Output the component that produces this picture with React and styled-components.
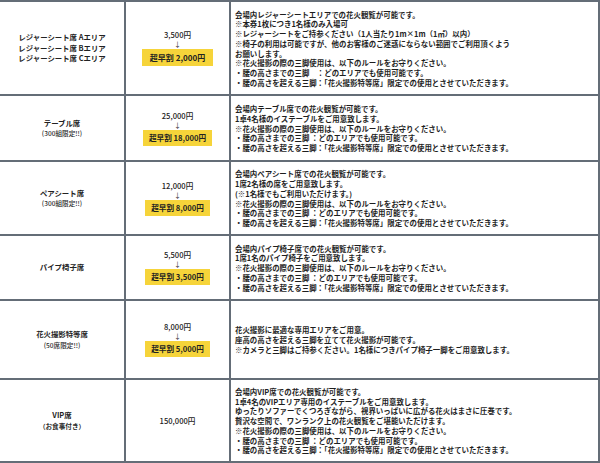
import React from 'react'
import styled, { createGlobalStyle } from 'styled-components'

const Global = createGlobalStyle`
  html, body { margin: 0; padding: 0; background: #fff; overflow: hidden; }
  body { font-family: 'Noto Sans CJK JP', 'Noto Sans', sans-serif; color: #222; }
`

const Table = styled.div`
  width: 600px; border-top: 2px solid #646d77;
  display: grid; grid-template-columns: 126px 105px 369px;
`
const Cell = styled.div`
  height: ${p => p.$h}px; box-sizing: border-box;
  border-right: 2px solid #646d77; border-bottom: 2px solid #646d77;
  display: flex; flex-direction: column; justify-content: center;
`
const NameCell = styled(Cell)`
  align-items: center; text-align: center;
`
const PriceCell = styled(Cell)`
  align-items: center;
`
const DescCell = styled(Cell)`
  padding-left: 4px; padding-top: 1px;
`
const Name = styled.div`
  font-size: 7.4px; line-height: 10.5px; font-weight: 700; color: #222;
  white-space: nowrap;
`
const Sub = styled.div`
  font-size: 6.6px; line-height: 10px; font-weight: ${p => p.$bold ? 700 : 500};
  color: #2a2a2a; white-space: nowrap;
`
const Price = styled.div`
  font-size: 7.6px; line-height: 10px; font-weight: 500; color: #222;
`
const Arrow = styled.div`
  font-size: 7px; line-height: 9px; color: #333;
`
const Badge = styled.div`
  background: #f6d43a; color: #222; font-weight: 700;
  font-size: ${p => p.$large ? 8 : 7.6}px; line-height: 10px;
  padding: ${p => p.$large ? '3.5px 8px' : '3px 6px'};
  white-space: nowrap;
`
const Line = styled.div`
  font-size: 7.45px; line-height: 9.7px; font-weight: 700; color: #1e1e1e;
  white-space: pre;
`

const tripod = [
  '※花火撮影の際の三脚使用は、以下のルールをお守りください。',
  '・腰の高さまでの三脚 ：どのエリアでも使用可能です。',
  '・腰の高さを超える三脚：「花火撮影特等席」限定での使用とさせていただきます。',
]

const rows = [
  {
    h: 94,
    name: ['レジャーシート席 Aエリア', 'レジャーシート席 Bエリア', 'レジャーシート席 Cエリア'],
    price: '3,500円', early: '2,000円', large: true,
    desc: [
      '会場内レジャーシートエリアでの花火観覧が可能です。',
      '※本券1枚につき1名様のみ入場可',
      '※レジャーシートをご持参ください（1人当たり1m×1m（1㎡）以内）',
      '※椅子の利用は可能ですが、他のお客様のご迷惑にならない範囲でご利用頂くよう',
      'お願いします。',
      '※花火撮影の際の三脚使用は、以下のルールをお守りください。',
      '・腰の高さまでの三脚　：どのエリアでも使用可能です。',
      tripod[2],
    ],
  },
  {
    h: 66,
    name: ['テーブル席'], sub: '(300組限定!!)',
    price: '25,000円', early: '18,000円',
    desc: ['会場内テーブル席での花火観覧が可能です。', '1卓4名様のイステーブルをご用意致します。', ...tripod],
  },
  {
    h: 74,
    name: ['ペアシート席'], sub: '(300組限定!!)',
    price: '12,000円', early: '8,000円',
    desc: ['会場内ペアシート席での花火観覧が可能です。', '1席2名様の席をご用意致します。', '(※1名様でもご利用いただけます。)', ...tripod],
  },
  {
    h: 65,
    name: ['パイプ椅子席'],
    price: '5,500円', early: '3,500円',
    desc: ['会場内パイプ椅子席での花火観覧が可能です。', '1席1名のパイプ椅子をご用意致します。', ...tripod],
  },
  {
    h: 79,
    name: ['花火撮影特等席'], sub: '(50席限定!!)',
    price: '8,000円', early: '5,000円',
    desc: [
      '花火撮影に最適な専用エリアをご用意。',
      '座高の高さを超える三脚を立てて花火撮影が可能です。',
      '※カメラと三脚はご持参ください。1名様につきパイプ椅子一脚をご用意致します。',
    ],
  },
  {
    h: 83,
    name: ['VIP席'], sub: '（お食事付き）', subBold: true,
    price: '150,000円',
    desc: [
      '会場内VIP席での花火観覧が可能です。',
      '1卓4名のVIPエリア専用のイステーブルをご用意致します。',
      'ゆったりソファーでくつろぎながら、視界いっぱいに広がる花火はまさに圧巻です。',
      '贅沢な空間で、ワンランク上の花火観覧をご堪能いただけます。',
      ...tripod,
    ],
  },
]

export default function App() {
  return (
    <>
      <Global />
      <Table>
        {rows.map((r, i) => (
          <React.Fragment key={i}>
            <NameCell $h={r.h}>
              {r.name.map(n => <Name key={n}>{n}</Name>)}
              {r.sub && <Sub $bold={r.subBold}>{r.sub}</Sub>}
            </NameCell>
            <PriceCell $h={r.h}>
              <Price>{r.price}</Price>
              {r.early && <>
                <Arrow>↓</Arrow>
                <Badge $large={r.large}>超早割 {r.early}</Badge>
              </>}
            </PriceCell>
            <DescCell $h={r.h}>
              {r.desc.map((d, j) => <Line key={j}>{d}</Line>)}
            </DescCell>
          </React.Fragment>
        ))}
      </Table>
    </>
  )
}
